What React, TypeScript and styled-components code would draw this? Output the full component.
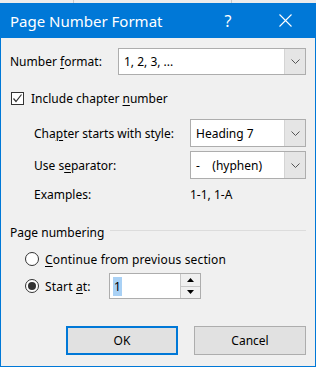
import React from 'react';
import styled, { createGlobalStyle } from 'styled-components';

const font = `'Segoe UI', 'Noto Sans', 'DejaVu Sans', sans-serif`;

const GlobalStyle = createGlobalStyle`
    html, body {
        margin: 0;
        padding: 0;
        background: #f0f0f0;
    }
    body {
        font-family: ${font};
        font-size: 12px;
        color: #000;
    }
`;

const Window = styled.div`
    width: 316px;
    height: 367px;
    display: flex;
    flex-direction: column;
    background: #f0f0f0;
    overflow: hidden;
`;

// bit of the Word window showing behind the dialog
const Backdrop = styled.div`
    height: 3px;
    flex-shrink: 0;
    background:
        linear-gradient(#c8c8c8, #c8c8c8) 73px 0 / 1px 100% no-repeat,
        linear-gradient(#c8c8c8, #c8c8c8) 231px 0 / 1px 100% no-repeat,
        #ececec;
`;

const Frame = styled.div`
    flex: 1;
    display: flex;
    flex-direction: column;
    border: 1px solid #0078d7;
    border-top: none;
`;

const TitleBar = styled.div`
    height: 35px;
    flex-shrink: 0;
    background: #0078d7;
    color: #fff;
    display: flex;
    align-items: center;
    padding: 0 7px 0 9px;
`;

const Title = styled.div`
    flex: 1;
    font-size: 15px;
`;

const TitleButton = styled.div<{ $gap?: number }>`
    width: 46px;
    height: 100%;
    display: flex;
    align-items: center;
    justify-content: center;
    font-size: 16px;
    margin-right: ${(p) => p.$gap || 0}px;
`;

const Body = styled.div`
    flex: 1;
    display: flex;
    flex-direction: column;
    padding: 10px 9px 0 9px;
`;

const FieldRow = styled.div<{ $labelWidth: number; $indent?: number; $height: number; $top: number }>`
    display: grid;
    grid-template-columns: ${(p) => p.$labelWidth}px 1fr;
    align-items: center;
    height: ${(p) => p.$height}px;
    margin-top: ${(p) => p.$top}px;
    padding-left: ${(p) => p.$indent || 0}px;
`;

const Combo = styled.div`
    height: 100%;
    box-sizing: border-box;
    border: 1px solid #adadad;
    background: #fff;
    display: flex;
    align-items: stretch;
`;

const ComboText = styled.div`
    flex: 1;
    display: flex;
    align-items: center;
    padding-left: 5px;
    white-space: pre;
`;

const ComboArrow = styled.div`
    width: 20px;
    background: #e5e5e5;
    border-left: 1px solid #d4d4d4;
    display: flex;
    align-items: center;
    justify-content: center;
`;

const CheckRow = styled.label<{ $top: number }>`
    display: flex;
    align-items: center;
    gap: 7px;
    height: 20px;
    margin-top: ${(p) => p.$top}px;
    padding-left: 1px;
`;

const CheckBox = styled.span`
    width: 13px;
    height: 13px;
    box-sizing: border-box;
    border: 1px solid #333;
    background: #fff;
    display: flex;
    align-items: center;
    justify-content: center;
`;

const Key = styled.span`
    text-decoration: underline;
    text-underline-offset: 2px;
`;

const GroupHeader = styled.div<{ $top: number }>`
    display: flex;
    align-items: center;
    gap: 6px;
    height: 16px;
    margin-top: ${(p) => p.$top}px;

    &::after {
        content: '';
        flex: 1;
        height: 1px;
        margin-top: -3px;
        background: #dcdcdc;
    }
`;

const RadioRow = styled.div<{ $top: number; $height: number }>`
    display: flex;
    align-items: center;
    height: ${(p) => p.$height}px;
    margin-top: ${(p) => p.$top}px;
    padding-left: 15px;
`;

const Radio = styled.span<{ $checked?: boolean }>`
    width: 14px;
    height: 14px;
    box-sizing: border-box;
    border: 1px solid #333;
    border-radius: 50%;
    background: #fff;
    display: flex;
    align-items: center;
    justify-content: center;
    margin-right: 6px;

    &::after {
        content: '';
        width: 8px;
        height: 8px;
        border-radius: 50%;
        background: #333;
        display: ${(p) => (p.$checked ? 'block' : 'none')};
    }
`;

const RadioLabel = styled.span<{ $width?: number }>`
    width: ${(p) => (p.$width ? `${p.$width}px` : 'auto')};
    letter-spacing: 0.15px;
`;

const Spin = styled.div`
    width: 92px;
    height: 26px;
    box-sizing: border-box;
    border: 1px solid #adadad;
    background: #fff;
    display: flex;
`;

const SpinValue = styled.div`
    flex: 1;
    display: flex;
    align-items: center;
    padding-left: 3px;

    span {
        background: #a9d1f5;
        padding: 1px 1px;
        line-height: 17px;
    }
`;

const SpinButtons = styled.div`
    width: 19px;
    display: flex;
    flex-direction: column;
    border-left: 1px solid #c8c8c8;
`;

const SpinButton = styled.div<{ $down?: boolean }>`
    flex: 1;
    display: flex;
    align-items: center;
    justify-content: center;
    background: #f0f0f0;
    border-top: ${(p) => (p.$down ? '1px solid #c8c8c8' : 'none')};
`;

const Footer = styled.div`
    display: flex;
    justify-content: flex-end;
    gap: 16px;
    margin-top: 27px;
`;

const Button = styled.button<{ $default?: boolean }>`
    width: 112px;
    height: 29px;
    box-sizing: border-box;
    font-family: ${font};
    font-size: 12px;
    color: #000;
    background: #e1e1e1;
    border: ${(p) => (p.$default ? '2px solid #0078d7' : '1px solid #adadad')};
    padding: 0;
`;

function Chevron() {
    return (
        <svg width="9" height="5" viewBox="0 0 9 5">
            <polyline points="0.5,0.5 4.5,4.5 8.5,0.5" fill="none" stroke="#555" strokeWidth="1" />
        </svg>
    );
}

function DropDown({ value }: { value: string }) {
    return (
        <Combo>
            <ComboText>{value}</ComboText>
            <ComboArrow>
                <Chevron />
            </ComboArrow>
        </Combo>
    );
}

function App() {
    return (
        <>
            <GlobalStyle />
            <Window>
                <Backdrop />
                <Frame>
                    <TitleBar>
                        <Title>Page Number Format</Title>
                        <TitleButton $gap={11}>?</TitleButton>
                        <TitleButton>
                            <svg width="13" height="13" viewBox="0 0 13 13">
                                <path d="M0.5 0.5 L12.5 12.5 M12.5 0.5 L0.5 12.5" stroke="#fff" strokeWidth="1.1" />
                            </svg>
                        </TitleButton>
                    </TitleBar>
                    <Body>
                        <FieldRow $labelWidth={108} $height={27} $top={0}>
                            <span>
                                Number <Key>f</Key>ormat:
                            </span>
                            <DropDown value="1, 2, 3, ..." />
                        </FieldRow>

                        <CheckRow $top={13}>
                            <CheckBox>
                                <svg width="11" height="11" viewBox="0 0 11 11">
                                    <polyline points="1.5,5.5 4,8.5 9.5,1.5" fill="none" stroke="#333" strokeWidth="1.2" />
                                </svg>
                            </CheckBox>
                            <span>
                                Include chapter <Key>n</Key>umber
                            </span>
                        </CheckRow>

                        <FieldRow $labelWidth={156} $indent={24} $height={28} $top={11}>
                            <span>
                                Cha<Key>p</Key>ter starts with style:
                            </span>
                            <DropDown value="Heading 7" />
                        </FieldRow>
                        <FieldRow $labelWidth={156} $indent={24} $height={28} $top={4}>
                            <span>
                                Use s<Key>e</Key>parator:
                            </span>
                            <DropDown value={'-    (hyphen)'} />
                        </FieldRow>
                        <FieldRow $labelWidth={156} $indent={24} $height={16} $top={7}>
                            <span>Examples:</span>
                            <span>1-1, 1-A</span>
                        </FieldRow>

                        <GroupHeader $top={22}>Page numbering</GroupHeader>

                        <RadioRow $top={9} $height={20}>
                            <Radio />
                            <RadioLabel>
                                <Key>C</Key>ontinue from previous section
                            </RadioLabel>
                        </RadioRow>
                        <RadioRow $top={4} $height={26}>
                            <Radio $checked />
                            <RadioLabel $width={64}>
                                Start <Key>a</Key>t:
                            </RadioLabel>
                            <Spin>
                                <SpinValue>
                                    <span>1</span>
                                </SpinValue>
                                <SpinButtons>
                                    <SpinButton>
                                        <svg width="7" height="4" viewBox="0 0 7 4">
                                            <polygon points="3.5,0 7,4 0,4" fill="#000" />
                                        </svg>
                                    </SpinButton>
                                    <SpinButton $down>
                                        <svg width="7" height="4" viewBox="0 0 7 4">
                                            <polygon points="0,0 7,0 3.5,4" fill="#000" />
                                        </svg>
                                    </SpinButton>
                                </SpinButtons>
                            </Spin>
                        </RadioRow>

                        <Footer>
                            <Button $default>OK</Button>
                            <Button>Cancel</Button>
                        </Footer>
                    </Body>
                </Frame>
            </Window>
        </>
    );
}

export default App;
